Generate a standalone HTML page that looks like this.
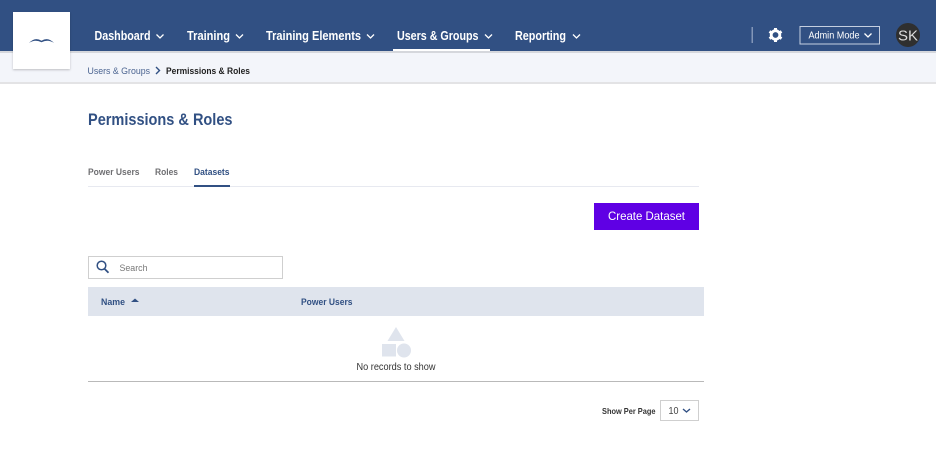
<!DOCTYPE html>
<html lang="en"><head><meta charset="utf-8"><title>Permissions &amp; Roles</title>
<style>
html,body{margin:0;padding:0;background:#fff;width:936px;height:466px;overflow:hidden}
svg{display:block}
text{font-family:"Liberation Sans",sans-serif}
.nav{font-size:12.500px;font-weight:700;fill:#fff}
.chev{fill:none;stroke:#fff;stroke-width:1.300}
</style></head><body>
<svg width="936" height="466" viewBox="0 0 936 466" xmlns="http://www.w3.org/2000/svg">
<rect x="0" y="53" width="936" height="29" fill="#f3f5fa"/>
<rect x="0" y="82" width="936" height="2" fill="#e3e3e5"/>
<rect x="0" y="51" width="936" height="2" fill="#d5d7dc"/>
<rect x="0" y="0" width="936" height="51" fill="#315083"/>
<rect x="13" y="12" width="57" height="57" fill="#fff" style="filter:drop-shadow(0 1px 1px rgba(0,0,0,.22))"/>
<path d="M29 43Q35 36.500 41.500 40.800Q48 36.500 54 43Q48 38.800 41.500 42.300Q35 38.800 29 43Z" fill="#315083"/>

<text class="nav" x="94.500" y="40" textLength="56" lengthAdjust="spacingAndGlyphs">Dashboard</text>
<path class="chev" d="M156.500 34.500l3.500 3.500 3.500-3.500"/>
<text class="nav" x="187" y="40" textLength="43" lengthAdjust="spacingAndGlyphs">Training</text>
<path class="chev" d="M236 34.500l3.500 3.500 3.500-3.500"/>
<text class="nav" x="266" y="40" textLength="95" lengthAdjust="spacingAndGlyphs">Training Elements</text>
<path class="chev" d="M367 34.500l3.500 3.500 3.500-3.500"/>
<text class="nav" x="397" y="40" textLength="81.500" lengthAdjust="spacingAndGlyphs">Users &amp; Groups</text>
<path class="chev" d="M485 34.500l3.500 3.500 3.500-3.500"/>
<text class="nav" x="515" y="40" textLength="51" lengthAdjust="spacingAndGlyphs">Reporting</text>
<path class="chev" d="M573 34.500l3.500 3.500 3.500-3.500"/>
<rect x="393" y="49" width="97" height="2" fill="#fff"/>

<rect x="751.500" y="27" width="1.500" height="16" fill="#8296b8"/>
<g transform="translate(775.500 35)">
<circle r="4.300" fill="none" stroke="#fff" stroke-width="2.800"/>
<g fill="#fff"><rect x="-1.500" y="-7" width="3" height="3"/><rect x="-1.500" y="4" width="3" height="3"/><rect x="-1.500" y="-7" width="3" height="3" transform="rotate(60)"/><rect x="-1.500" y="4" width="3" height="3" transform="rotate(60)"/><rect x="-1.500" y="-7" width="3" height="3" transform="rotate(120)"/><rect x="-1.500" y="4" width="3" height="3" transform="rotate(120)"/></g>
</g>
<rect x="800" y="26.500" width="79.500" height="17.500" fill="none" stroke="#c5cfe0" stroke-width="1"/>
<text x="808.500" y="38.500" font-size="9.800" fill="#fff" textLength="51" lengthAdjust="spacingAndGlyphs">Admin Mode</text>
<path d="M864.500 33.500l3.500 3.500 3.500-3.500" fill="none" stroke="#fff" stroke-width="1.300"/>
<circle cx="908" cy="35" r="12" fill="#2f2f2f"/>
<text x="898" y="40.500" font-size="15" fill="#dcdcdc" textLength="20" lengthAdjust="spacingAndGlyphs">SK</text>

<text x="87.500" y="74" font-size="9.500" fill="#4a6390" textLength="62.500" lengthAdjust="spacingAndGlyphs">Users &amp; Groups</text>
<path d="M156 67l3.500 3.500-3.500 3.500" fill="none" stroke="#315083" stroke-width="1.400"/>
<text x="166" y="74" font-size="9.500" font-weight="700" fill="#222" textLength="84" lengthAdjust="spacingAndGlyphs">Permissions &amp; Roles</text>

<text x="88" y="125" font-size="16.500" font-weight="700" fill="#315083" textLength="144.500" lengthAdjust="spacingAndGlyphs">Permissions &amp; Roles</text>

<text x="88" y="175" font-size="9.500" font-weight="700" fill="#6f6f72" textLength="51.500" lengthAdjust="spacingAndGlyphs">Power Users</text>
<text x="155" y="175" font-size="9.500" font-weight="700" fill="#6f6f72" textLength="23" lengthAdjust="spacingAndGlyphs">Roles</text>
<text x="194" y="175" font-size="9.500" font-weight="700" fill="#315083" textLength="35.500" lengthAdjust="spacingAndGlyphs">Datasets</text>
<rect x="88" y="186" width="611" height="1" fill="#e7e9f0"/>
<rect x="194" y="185" width="36" height="2" fill="#315083"/>

<rect x="594" y="203" width="105" height="27" fill="#5f00e4"/>
<text x="608" y="220" font-size="12" fill="#fff" textLength="77" lengthAdjust="spacingAndGlyphs">Create Dataset</text>

<rect x="88.500" y="256.500" width="194" height="22" fill="#fff" stroke="#cfcfcf"/>
<circle cx="101.500" cy="265.500" r="4.300" fill="none" stroke="#315083" stroke-width="1.500"/>
<path d="M104.500 268.700l4 4" stroke="#315083" stroke-width="1.800" fill="none"/>
<text x="119.500" y="271" font-size="9.500" fill="#777" textLength="28" lengthAdjust="spacingAndGlyphs">Search</text>

<rect x="88" y="287" width="616" height="29" fill="#dfe4ed"/>
<text x="101" y="305" font-size="9.500" font-weight="700" fill="#315083" textLength="24" lengthAdjust="spacingAndGlyphs">Name</text>
<path d="M131 302l4-3.500 4 3.500z" fill="#315083"/>
<text x="301" y="305" font-size="9.500" font-weight="700" fill="#315083" textLength="51.500" lengthAdjust="spacingAndGlyphs">Power Users</text>

<path d="M396 327l8.500 14h-17z" fill="#dfe4ed"/>
<rect x="382" y="344" width="14" height="12.500" fill="#dfe4ed"/>
<circle cx="404" cy="350.500" r="7" fill="#dfe4ed"/>
<text x="356.500" y="370" font-size="9.800" fill="#333" textLength="79" lengthAdjust="spacingAndGlyphs">No records to show</text>
<rect x="88" y="381" width="616" height="1" fill="#b9b9b9"/>

<text x="602" y="414" font-size="8.300" font-weight="700" fill="#333" textLength="53.500" lengthAdjust="spacingAndGlyphs">Show Per Page</text>
<rect x="660.500" y="400.500" width="38" height="20" fill="#fff" stroke="#cfcfcf"/>
<text x="668.500" y="414" font-size="10.300" fill="#444" textLength="10" lengthAdjust="spacingAndGlyphs">10</text>
<path d="M683 409l3.500 3 3.500-3" fill="none" stroke="#315083" stroke-width="1.400"/>
</svg>
</body></html>
